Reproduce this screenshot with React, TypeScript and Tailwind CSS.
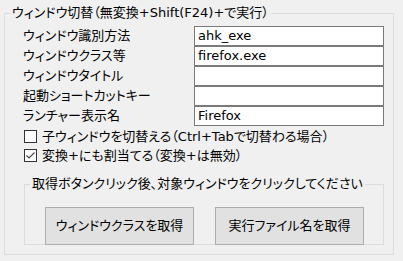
import React from "react";

const rows: [string, string][] = [
  ["ウィンドウ識別方法", "ahk_exe"],
  ["ウィンドウクラス等", "firefox.exe"],
  ["ウィンドウタイトル", ""],
  ["起動ショートカットキー", ""],
  ["ランチャー表示名", "Firefox"],
];

function Check({ checked, label }: { checked: boolean; label: string }) {
  return (
    <div className="flex h-[19px] items-center pl-[19px]">
      <span className="flex h-[13px] w-[13px] items-center justify-center border border-[#333333] bg-white">
        {checked && (
          <svg width="11" height="11" viewBox="0 0 11 11">
            <path d="M1.5 5.5 L4 8 L9.5 2.5" fill="none" stroke="#444444" strokeWidth="1.1" />
          </svg>
        )}
      </span>
      <span className="ml-[5px] whitespace-nowrap leading-[19px]">{label}</span>
    </div>
  );
}

export default function App() {
  return (
    <div className="h-[261px] w-[403px] overflow-hidden bg-[#f0f0f0] pt-[4px] pl-[4px] text-[13px] text-black [font-feature-settings:'palt'] font-['DejaVu_Sans','Noto_Sans_CJK_JP',sans-serif]">
      <fieldset className="h-[251px] w-[390px] border border-[#dcdcdc] pb-[9px]">
        <legend className="ml-[5px] whitespace-nowrap px-[2px] leading-[18px]">
          ウィンドウ切替（無変換+Shift(F24)+で実行）
        </legend>
        <div className="pt-[4px]">
          {rows.map(([label, value]) => (
            <div key={label} className="flex h-[20px] items-center">
              <div className="w-[189px] whitespace-nowrap pl-[18px] leading-[20px]">{label}</div>
              <div className="h-[20px] w-[190px] border border-[#7a7a7a] bg-white pl-[3px] leading-[18px]">
                {value}
              </div>
            </div>
          ))}
        </div>
        <div className="pt-[1px]">
          <Check checked={false} label="子ウィンドウを切替える（Ctrl+Tabで切替わる場合）" />
          <Check checked={true} label="変換+にも割当てる（変換+は無効）" />
        </div>
        <fieldset className="ml-[19px] mt-[10px] w-[360px] border border-[#dcdcdc]">
          <legend className="ml-[5px] whitespace-nowrap px-[2px] leading-[18px]">
            取得ボタンクリック後、対象ウィンドウをクリックしてください
          </legend>
          <div className="mb-[-1px] flex gap-[21px] pl-[20px] pt-[14px]">
            <button className="h-[38px] w-[149px] whitespace-nowrap border border-[#adadad] bg-[#e1e1e1]">
              ウィンドウクラスを取得
            </button>
            <button className="h-[38px] w-[149px] whitespace-nowrap border border-[#adadad] bg-[#e1e1e1]">
              実行ファイル名を取得
            </button>
          </div>
        </fieldset>
      </fieldset>
    </div>
  );
}
